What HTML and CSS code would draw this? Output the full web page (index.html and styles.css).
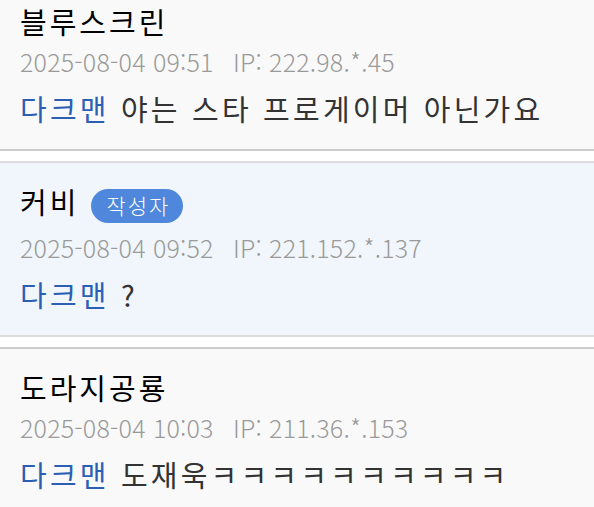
FILE: index.html
```html
<!DOCTYPE html>
<html lang="ko">
	<head>
		<meta charset="UTF-8" />
		<meta name="viewport" content="width=device-width, initial-scale=1.0" />
		<title>댓글</title>
		<link rel="stylesheet" href="styles.css">
	</head>
	<body>
		<ul class="comment-list">
			<li class="comment">
				<div class="comment-name">블루스크린</div>
				<div class="comment-meta">2025-08-04 09:51 <span class="comment-ip">IP: 222.98.*.45</span></div>
				<div class="comment-text"><a class="mention" href="#">다크맨</a> 야는 스타 프로게이머 아닌가요</div>
			</li>
			<li class="comment comment-author">
				<div class="comment-name">커비 <span class="badge">작성자</span></div>
				<div class="comment-meta">2025-08-04 09:52 <span class="comment-ip">IP: 221.152.*.137</span></div>
				<div class="comment-text"><a class="mention" href="#">다크맨</a> ?</div>
			</li>
			<li class="comment">
				<div class="comment-name">도라지공룡</div>
				<div class="comment-meta">2025-08-04 10:03 <span class="comment-ip">IP: 211.36.*.153</span></div>
				<div class="comment-text"><a class="mention" href="#">다크맨</a> 도재욱ㅋㅋㅋㅋㅋㅋㅋㅋㅋㅋ</div>
			</li>
		</ul>
	</body>
</html>
```

FILE: styles.css
```css
body {
	margin: 0;
	background-color: #fff;
	font-family: "Noto Sans CJK KR", "Noto Sans", sans-serif;
	overflow: hidden;
}

.comment-list {
	list-style: none;
	margin: -19px 0 0 0;
	padding: 0;
}

.comment {
	background-color: #f9f9f9;
	border-top: 2px solid #ccc;
	border-bottom: 2px solid #ccc;
	padding: 20px 20px 23px 20px;
	margin-bottom: 10px;
}

.comment-author {
	background-color: #f0f6fb;
	border-color: #dcdcdc;
}

.comment-name {
	font-size: 29px;
	line-height: 36px;
	letter-spacing: 3px;
	color: #000;
}

.badge {
	display: inline-block;
	vertical-align: middle;
	margin: 2px 0 2px 1px;
	padding: 0 13px 0 15px;
	height: 34px;
	line-height: 33px;
	border-radius: 17px;
	background-color: #4f87dc;
	color: #fff;
	font-size: 21px;
	font-weight: 300;
	letter-spacing: 2px;
}

.comment-meta {
	margin-top: 7px;
	font-size: 25px;
	font-weight: 300;
	line-height: 30px;
	letter-spacing: 0.2px;
	color: #9a9a9a;
}

.comment-ip {
	margin-left: 12px;
}

.comment-text {
	margin-top: 14px;
	font-size: 29px;
	line-height: 36px;
	letter-spacing: 3.2px;
	color: #333;
}

.mention {
	color: #2b5fb4;
	text-decoration: none;
}
```
